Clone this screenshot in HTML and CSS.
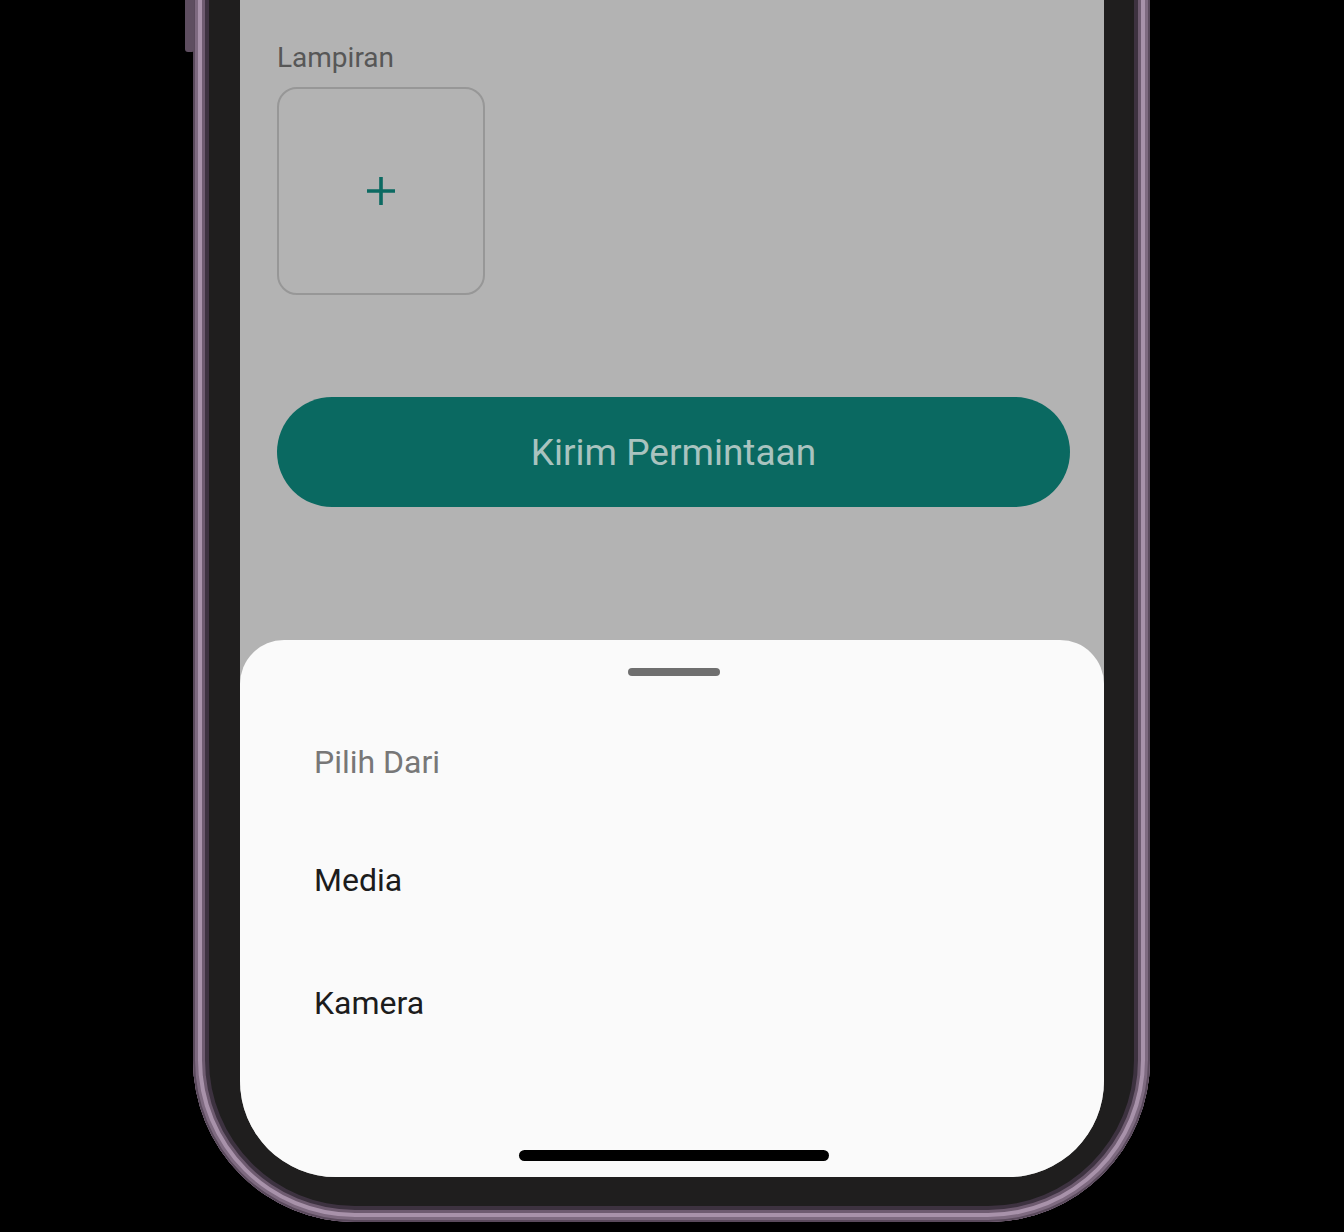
FILE: index.html
```html
<!DOCTYPE html>
<html lang="id">
<head>
<meta charset="utf-8">
<title>Lampiran</title>
<link rel="stylesheet" href="styles.css">
</head>
<body>
<div class="phone">
  <div class="screen">
    <div class="content">
      <div class="label">Lampiran</div>
      <div class="attach">
        <svg class="plus" width="32" height="32" viewBox="0 0 32 32" aria-hidden="true">
          <path d="M16 2 V30 M2 16 H30" stroke="#0c6a62" stroke-width="3.6" fill="none"/>
        </svg>
      </div>
      <div class="submit">Kirim Permintaan</div>
    </div>
    <div class="sheet">
      <div class="handle"></div>
      <div class="sheet-title">Pilih Dari</div>
      <div class="option">Media</div>
      <div class="option">Kamera</div>
      <div class="home"></div>
    </div>
  </div>
</div>
</body>
</html>
```
FILE: styles.css
```css
html, body {
  margin: 0;
  padding: 0;
  background: #000;
  overflow: hidden;
}
body {
  font-family: Roboto, "Noto Sans", "Liberation Sans", sans-serif;
  width: 1344px;
  height: 1232px;
}
.phone {
  position: relative;
  box-sizing: border-box;
  width: 957px;
  height: 1282px;
  margin-top: -60px;
  margin-left: 193px;
  padding: 60px 46px 45px 47px;
  background: #1f1e1e;
  border-radius: 0 0 162px 162px;
  box-shadow:
    inset 0 0 0 2px #5a4a5c,
    inset 0 0 0 5px #7e6a80,
    inset 0 0 0 9px #a892aa,
    inset 0 0 0 12px #6e5b70,
    inset 0 0 0 16px #3d3240;
}
.phone::before {
  content: "";
  position: absolute;
  left: -8px;
  top: 0;
  width: 9px;
  height: 112px;
  background: #5e4e60;
  border-radius: 0 0 2px 3px;
}
.screen {
  position: relative;
  height: 1177px;
  background: #b3b3b3;
  border-radius: 0 0 96px 96px;
  overflow: hidden;
}
.content {
  display: flex;
  flex-direction: column;
  padding: 40px 34px 0 37px;
}
.label {
  font-size: 28px;
  line-height: 35px;
  color: #575757;
}
.attach {
  box-sizing: border-box;
  width: 208px;
  height: 208px;
  margin-top: 12px;
  border: 2px solid #979797;
  border-radius: 20px;
  display: flex;
  align-items: center;
  justify-content: center;
}
.submit {
  margin-top: 102px;
  height: 110px;
  border-radius: 55px;
  background: #0a6961;
  color: #a9c3bf;
  font-size: 37px;
  display: flex;
  align-items: center;
  justify-content: center;
}
.sheet {
  position: absolute;
  left: 0;
  right: 0;
  bottom: 0;
  height: 537px;
  background: #fafafa;
  border-radius: 44px 44px 0 0;
  display: flex;
  flex-direction: column;
  padding: 0 0 0 74px;
  box-sizing: border-box;
}
.handle {
  align-self: center;
  margin-left: -70px;
  margin-top: 28px;
  width: 92px;
  height: 8px;
  border-radius: 4px;
  background: #6f6f6f;
}
.sheet-title {
  margin-top: 68px;
  font-size: 32px;
  line-height: 36px;
  color: #777;
}
.option {
  margin-top: 80px;
  font-size: 32px;
  line-height: 40px;
  color: #1c1c1c;
}
.option + .option {
  margin-top: 83px;
}
.home {
  position: absolute;
  left: 279px;
  bottom: 16px;
  width: 310px;
  height: 11px;
  border-radius: 6px;
  background: #000;
}
```
